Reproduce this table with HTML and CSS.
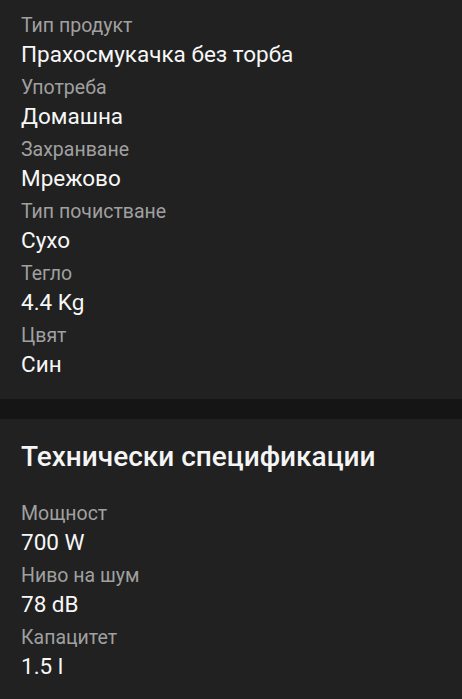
FILE: index.html
```html
<!DOCTYPE html>
<html>
<head>
  <title>Характеристики</title>
  <link rel="stylesheet" href="styles.css">
</head>
<body>
  <div class="section">
    <div class="spec">
      <div class="spec-label">Тип продукт</div>
      <div class="spec-value">Прахосмукачка без торба</div>
    </div>
    <div class="spec">
      <div class="spec-label">Употреба</div>
      <div class="spec-value">Домашна</div>
    </div>
    <div class="spec">
      <div class="spec-label">Захранване</div>
      <div class="spec-value">Мрежово</div>
    </div>
    <div class="spec">
      <div class="spec-label">Тип почистване</div>
      <div class="spec-value">Сухо</div>
    </div>
    <div class="spec">
      <div class="spec-label">Тегло</div>
      <div class="spec-value">4.4 Kg</div>
    </div>
    <div class="spec">
      <div class="spec-label">Цвят</div>
      <div class="spec-value">Син</div>
    </div>
  </div>

  <div class="divider"></div>

  <!-- Technical specs -->
  <div class="section section-tech">
    <h2>Технически спецификации</h2>
    <div class="spec">
      <div class="spec-label">Мощност</div>
      <div class="spec-value">700 W</div>
    </div>
    <div class="spec">
      <div class="spec-label">Ниво на шум</div>
      <div class="spec-value">78 dB</div>
    </div>
    <div class="spec">
      <div class="spec-label">Капацитет</div>
      <div class="spec-value">1.5 l</div>
    </div>
  </div>
</body>
</html>
```

FILE: styles.css
```css
body {
  margin: 0;
  background-color: #212121;
  font-family: Roboto, "Noto Sans", sans-serif;
  color: #f2f2f2;
}

.section {
  padding: 12px 21px 19px;
  display: flex;
  flex-direction: column;
  gap: 4px;
}

.section-tech {
  padding-top: 21px;
}

.section h2 {
  margin: 0 0 22px;
  font-size: 28px;
  line-height: 34px;
  font-weight: 500;
  color: #f5f5f5;
}

.spec-label {
  font-size: 19.5px;
  line-height: 27px;
  color: #a0a0a0;
}

.spec-value {
  font-size: 22.5px;
  line-height: 31px;
  color: #f7f7f7;
}

.divider {
  height: 20px;
  background-color: #151515;
}
```
